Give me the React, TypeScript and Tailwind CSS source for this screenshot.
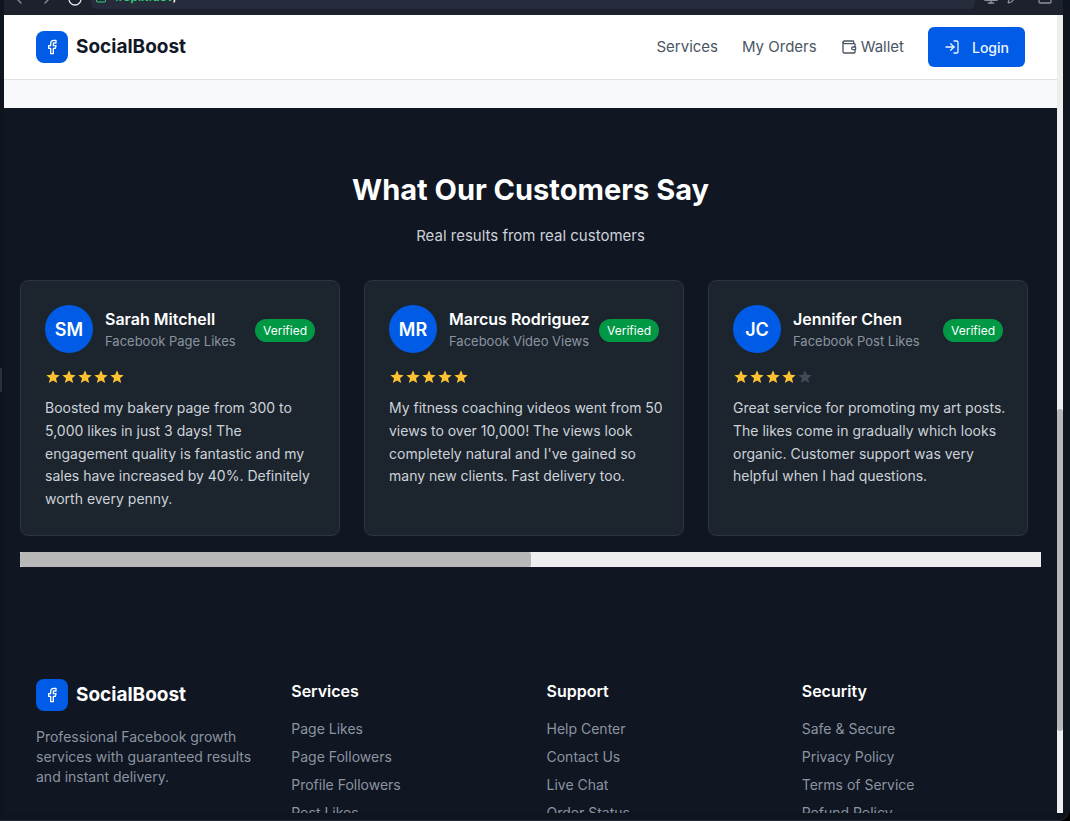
import React from "react";
import { ChevronLeft, ChevronRight, ChevronDown, RotateCw, Lock, Monitor, Pencil, Square, LogIn } from "lucide-react";
import { MdStar } from "react-icons/md";

function FacebookGlyph() {
  return (
    <svg viewBox="0 0 24 24" className="size-4" fill="none" stroke="currentColor" strokeWidth="2" strokeLinecap="round" strokeLinejoin="round">
      <path d="M18 2h-3a5 5 0 0 0-5 5v3H7v4h3v8h4v-8h3l1-4h-4V7a1 1 0 0 1 1-1h3z" />
    </svg>
  );
}

function WalletGlyph() {
  return (
    <svg viewBox="0 0 24 24" className="size-4" fill="none" stroke="currentColor" strokeWidth="2" strokeLinecap="round" strokeLinejoin="round">
      <path d="M19 7V4a1 1 0 0 0-1-1H5a2 2 0 0 0 0 4h15a1 1 0 0 1 1 1v4h-3a2 2 0 0 0 0 4h3a1 1 0 0 0 1-1v-2a1 1 0 0 0-1-1" />
      <path d="M3 5v14a2 2 0 0 0 2 2h15a1 1 0 0 0 1-1v-4" />
    </svg>
  );
}

function Brand({ tone }: { tone: string }) {
  return (
    <a href="#home" className="flex items-center gap-2">
      <span className="flex size-8 items-center justify-center rounded-lg bg-[#005ce6] text-white">
        <FacebookGlyph />
      </span>
      <span className={"text-[19px] leading-7 font-bold " + tone}>SocialBoost</span>
    </a>
  );
}

const reviews = [
  {
    initials: "SM",
    name: "Sarah Mitchell",
    service: "Facebook Page Likes",
    stars: 5,
    text: "Boosted my bakery page from 300 to 5,000 likes in just 3 days! The engagement quality is fantastic and my sales have increased by 40%. Definitely worth every penny.",
  },
  {
    initials: "MR",
    name: "Marcus Rodriguez",
    service: "Facebook Video Views",
    stars: 5,
    text: "My fitness coaching videos went from 50 views to over 10,000! The views look completely natural and I've gained so many new clients. Fast delivery too.",
  },
  {
    initials: "JC",
    name: "Jennifer Chen",
    service: "Facebook Post Likes",
    stars: 4,
    text: "Great service for promoting my art posts. The likes come in gradually which looks organic. Customer support was very helpful when I had questions.",
  },
];

const columns = [
  { title: "Services", links: ["Page Likes", "Page Followers", "Profile Followers", "Post Likes"] },
  { title: "Support", links: ["Help Center", "Contact Us", "Live Chat", "Order Status"] },
  { title: "Security", links: ["Safe & Secure", "Privacy Policy", "Terms of Service", "Refund Policy"] },
];

function BrowserBar() {
  return (
    <div className="mr-[7px] ml-1 flex h-[15px] shrink-0 items-end overflow-hidden bg-[#1c212d] pl-[7px] text-[#8d939d]">
      <div className="flex items-center gap-3 pb-2">
        <button aria-label="Back"><ChevronLeft className="size-4" /></button>
        <button aria-label="Forward"><ChevronRight className="size-4" /></button>
        <button aria-label="Reload" className="text-[#e2e5ea]"><RotateCw className="size-4" /></button>
      </div>
      <div className="mb-1.5 ml-2 flex h-6 flex-1 items-center gap-2 rounded-md bg-[#272c3c] px-1 text-[12px] font-semibold text-[#32d274]">
        <Lock className="size-3" />
        <span>.replit.dev<span className="text-white">/</span></span>
        <ChevronDown className="ml-auto size-4" color="#8d939d" />
      </div>
      <div className="flex items-center gap-2 pr-2.5 pb-2.5 pl-2">
        <button aria-label="Devices"><Monitor className="size-4" /></button>
        <button aria-label="Edit"><Pencil className="size-3.5" /></button>
        <button aria-label="Open in new tab" className="ml-2"><Square className="size-4" /></button>
      </div>
    </div>
  );
}

function Review({ review }: { review: (typeof reviews)[number] }) {
  return (
    <article className="w-80 shrink-0 rounded-lg border border-[#2b3541] bg-[#1c252e] p-6">
      <div className="flex h-12 items-center">
        <div className="flex size-12 shrink-0 items-center justify-center rounded-full bg-[#005ce6] text-[18px] font-semibold text-white">
          {review.initials}
        </div>
        <div className="ml-3 whitespace-nowrap">
          <h3 className="text-[16px] leading-6 font-semibold text-white">{review.name}</h3>
          <p className="text-[13px] leading-5 text-[#8b94a1]">{review.service}</p>
        </div>
        <span className="mt-0.5 ml-auto rounded-full bg-[#009845] px-2 text-[12px] leading-[23px] text-white">Verified</span>
      </div>
      <div className="mt-4 flex h-4" role="img" aria-label={review.stars + " of 5 stars"}>
        {[0, 1, 2, 3, 4].map((i) => (
          <span key={i} className="flex size-4 items-center justify-center">
            <MdStar className={i < review.stars ? "size-4 text-[#ffc233]" : "size-4 text-[#414b58]"} />
          </span>
        ))}
      </div>
      <p className="mt-3 -mr-2 text-[14px] leading-relaxed text-[#cdd2d9]">{review.text}</p>
    </article>
  );
}

export default function App() {
  return (
    <div className="h-screen bg-black">
      <div className="relative flex h-full flex-col overflow-hidden rounded-br-xl border-b border-[#262b38] bg-[#0f151f] font-['Inter','Liberation_Sans',sans-serif]">
        <BrowserBar />
        <div className="mr-[7px] mb-[7px] ml-1 flex min-h-0 flex-1">
          <div className="flex min-w-0 flex-1 flex-col overflow-hidden bg-[#101622]">
            <header className="flex h-[65px] shrink-0 items-center justify-between border-b border-[#dfe1e4] bg-white px-8">
              <Brand tone="text-[#111827]" />
              <nav className="flex items-center gap-6 text-[15px] text-[#4b5563]">
                <a href="#services">Services</a>
                <a href="#orders">My Orders</a>
                <a href="#wallet" className="flex items-center gap-1"><WalletGlyph />Wallet</a>
                <button className="flex h-10 items-center gap-3 rounded-md bg-[#005ce6] px-4 text-[14px] font-medium text-[#eef4fd]">
                  <LogIn className="size-4" />Login
                </button>
              </nav>
            </header>
            <div className="h-7 shrink-0 bg-[#f8f9fb]" />
            <section className="shrink-0 px-4 py-16">
              <h2 className="text-center text-[29px] leading-9 font-bold text-white">What Our Customers Say</h2>
              <p className="mt-4 text-center text-[15px] leading-6 text-[#cdd2d9]">Real results from real customers</p>
              <div className="mt-8 flex gap-6 overflow-hidden">
                {reviews.map((r) => <Review key={r.name} review={r} />)}
              </div>
              <div className="mt-4 h-[15px] bg-[#eeeeee]">
                <div className="h-full w-1/2 rounded-xs bg-[#b8b8b8]" />
              </div>
            </section>
            <footer className="grid shrink-0 grid-cols-4 gap-8 px-8 pt-12">
              <div>
                <Brand tone="text-white" />
                <p className="mt-4 text-[14px] leading-5 text-[#8b94a1]">Professional Facebook growth services with guaranteed results and instant delivery.</p>
              </div>
              {columns.map((c) => (
                <div key={c.title}>
                  <h3 className="text-[16px] leading-6 font-semibold text-white">{c.title}</h3>
                  <ul className="mt-4 flex flex-col gap-2 text-[14px] leading-5 text-[#8b94a1]">
                    {c.links.map((l) => <li key={l}><a href="#links">{l}</a></li>)}
                  </ul>
                </div>
              ))}
            </footer>
          </div>
          <div className="flex w-1.5 flex-col bg-[#eeeeee]">
            <div className="flex-[394]" />
            <div className="flex-[322] rounded-full bg-[#b8b8b8]" />
            <div className="flex-[82]" />
          </div>
        </div>
        <div className="absolute top-[368px] left-0 h-6 w-0.5 bg-[#2a3040]" />
      </div>
    </div>
  );
}
